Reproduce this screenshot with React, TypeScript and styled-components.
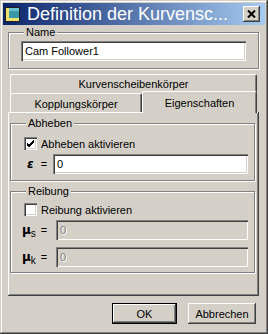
import React from 'react'
import styled, { createGlobalStyle } from 'styled-components'

const GlobalStyle = createGlobalStyle`
  * { box-sizing: border-box; }
  body { margin: 0; background: #d4d0c8; font-family: "Liberation Sans", Arial, sans-serif; font-size: 11px; color: #000; }
`

const raised = `inset -1px -1px #404040, inset 1px 1px #fff, inset -2px -2px #808080, inset 2px 2px #d4d0c8`
const sunken = `inset 1px 1px #808080, inset 2px 2px #404040, inset -1px -1px #fff, inset -2px -2px #d4d0c8`

const Window = styled.div`
  width: 268px;
  height: 334px;
  padding: 3px;
  background: #d4d0c8;
  box-shadow: inset -1px -1px #404040, inset 1px 1px #d4d0c8, inset -2px -2px #808080, inset 2px 2px #fff;
  display: flex;
  flex-direction: column;
`

const TitleBar = styled.div`
  height: 22px;
  flex-shrink: 0;
  display: flex;
  align-items: center;
  gap: 7px;
  padding: 0 5px 0 2px;
  background: linear-gradient(to right, #0a246a, #a6caf0);
`

const TitleText = styled.div`
  flex: 1;
  color: #fff;
  font-size: 18px;
  line-height: 22px;
  white-space: nowrap;
  overflow: hidden;
`

const CloseButton = styled.div`
  width: 17px;
  height: 16px;
  background: #d4d0c8;
  box-shadow: ${raised};
  display: flex;
  align-items: center;
  justify-content: center;
`

const Body = styled.div`
  display: flex;
  flex-direction: column;
  padding: 0 6px 0 5px;
`

// group box: caption line, then an etched frame pulled up under the caption
const Group = styled.div<{ $top?: number }>`
  margin-top: ${p => p.$top ?? 0}px;
  display: flex;
  flex-direction: column;
`

const CaptionRow = styled.div`
  display: flex;
  padding-left: 16px;
  height: 13px;
  position: relative;
  z-index: 1;
`

const Caption = styled.span`
  padding: 0 2px;
  line-height: 13px;
  background: #d4d0c8;
`

const Frame = styled.div<{ $pad: string }>`
  margin-top: -7px;
  padding: ${p => p.$pad};
  border: 1px solid #808080;
  box-shadow: inset 1px 1px #fff, 1px 1px #fff;
`

const TextInput = styled.div<{ $disabled?: boolean }>`
  flex: 1;
  height: 20px;
  padding: 0 4px;
  display: flex;
  align-items: center;
  background: ${p => (p.$disabled ? '#d4d0c8' : '#fff')};
  color: ${p => (p.$disabled ? '#808080' : '#000')};
  text-shadow: ${p => (p.$disabled ? '1px 1px #fff' : 'none')};
  box-shadow: ${sunken};
  white-space: nowrap;
`

const Tabs = styled.div`
  margin-top: 5px;
  display: flex;
  flex-direction: column;
`

const TabRow = styled.div`
  display: flex;
  align-items: flex-end;
  height: 19px;
  padding: 0 2px;
`

const Tab = styled.div<{ $width?: number; $active?: boolean; $drop?: number }>`
  flex: ${p => (p.$width ? `0 0 ${p.$width}px` : '1')};
  height: ${p => (p.$active ? 22 : 19)}px;
  margin-bottom: ${p => (p.$active ? -1 : 0)}px;
  position: relative;
  z-index: ${p => (p.$active ? 1 : 0)};
  display: flex;
  align-items: center;
  justify-content: center;
  padding-top: ${p => p.$drop ?? 0}px;
  background: #d4d0c8;
  border-top: 1px solid #fff;
  border-left: 1px solid #fff;
  border-right: 1px solid #404040;
  border-radius: 2px 2px 0 0;
  box-shadow: inset -1px 0 #808080;
`

const Panel = styled.div`
  height: 184px;
  padding: 5px 4px 0 2px;
  background: #d4d0c8;
  box-shadow: ${raised};
  display: flex;
  flex-direction: column;
`

const CheckRow = styled.div`
  display: flex;
  align-items: center;
  gap: 4px;
  padding-left: 13px;
  height: 15px;
`

const Box = styled.div`
  width: 13px;
  height: 13px;
  background: #fff;
  box-shadow: ${sunken};
  display: flex;
  align-items: center;
  justify-content: center;
`

const FieldRow = styled.div<{ $top: number }>`
  display: flex;
  align-items: center;
  margin-top: ${p => p.$top}px;
`

const Symbol = styled.div<{ $width: number; $indent: number }>`
  width: ${p => p.$width}px;
  padding-left: ${p => p.$indent}px;
  display: flex;
  align-items: center;
  white-space: nowrap;
`

const Greek = styled.span<{ $italic?: boolean }>`
  font-family: "DejaVu Sans", sans-serif;
  font-weight: bold;
  font-style: ${p => (p.$italic ? 'italic' : 'normal')};
  font-size: 12px;
`

const Sub = styled.span`
  font-size: 10px;
  position: relative;
  top: 3px;
  margin-right: 5px;
`

const Equals = styled.span<{ $gap: number }>`
  margin-left: ${p => p.$gap}px;
`

const ButtonRow = styled.div`
  display: flex;
  justify-content: flex-end;
  gap: 11px;
  margin-top: 7px;
  padding-right: 3px;
`

const Button = styled.div<{ $width: number; $default?: boolean }>`
  width: ${p => p.$width}px;
  height: 21px;
  display: flex;
  align-items: center;
  justify-content: center;
  background: #d4d0c8;
  border: ${p => (p.$default ? '1px solid #000' : 'none')};
  box-shadow: ${raised};
`

const AppIcon = () => (
  <svg width="15" height="15" viewBox="0 0 15 15">
    <rect x="0.5" y="0.5" width="14" height="14" fill="#f0e070" stroke="#202020" />
    <rect x="4" y="1" width="10" height="10" fill="#3a9aa8" />
    <rect x="4" y="1" width="10" height="3" fill="#6cc4d0" />
  </svg>
)

const Check = () => (
  <svg width="9" height="9" viewBox="0 0 9 9">
    <path d="M1 4 L3 6 L8 1 M1 5 L3 7 L8 2 M1 6 L3 8 L8 3" stroke="#000" strokeWidth="1" fill="none" />
  </svg>
)

export default function App() {
  return (
    <>
      <GlobalStyle />
      <Window>
        <TitleBar>
          <AppIcon />
          <TitleText>Definition der Kurvensc...</TitleText>
          <CloseButton>
            <svg width="9" height="8" viewBox="0 0 9 8">
              <path d="M1 0.5 L8 7.5 M8 0.5 L1 7.5" stroke="#000" strokeWidth="2" />
            </svg>
          </CloseButton>
        </TitleBar>

        <Body>
          <Group $top={1}>
            <CaptionRow><Caption>Name</Caption></CaptionRow>
            <Frame $pad="8px 12px 7px">
              <TextInput>Cam Follower1</TextInput>
            </Frame>
          </Group>

          <Tabs>
            <TabRow>
              <Tab>Kurvenscheibenkörper</Tab>
            </TabRow>
            <TabRow>
              <Tab $width={132} $drop={2}>Kopplungskörper</Tab>
              <Tab $active $drop={1}>Eigenschaften</Tab>
            </TabRow>
            <Panel>
              <Group>
                <CaptionRow><Caption>Abheben</Caption></CaptionRow>
                <Frame $pad="12px 6px 6px 0">
                  <CheckRow>
                    <Box><Check /></Box>
                    Abheben aktivieren
                  </CheckRow>
                  <FieldRow $top={3}>
                    <Symbol $width={42} $indent={16}>
                      <Greek $italic>ε</Greek>
                      <Equals $gap={7}>=</Equals>
                    </Symbol>
                    <TextInput>0</TextInput>
                  </FieldRow>
                </Frame>
              </Group>

              <Group $top={4}>
                <CaptionRow><Caption>Reibung</Caption></CaptionRow>
                <Frame $pad="10px 6px 5px 0">
                  <CheckRow>
                    <Box />
                    Reibung aktivieren
                  </CheckRow>
                  <FieldRow $top={3}>
                    <Symbol $width={45} $indent={11}>
                      <Greek>μ</Greek>
                      <Sub>s</Sub>
                      =
                    </Symbol>
                    <TextInput $disabled>0</TextInput>
                  </FieldRow>
                  <FieldRow $top={7}>
                    <Symbol $width={45} $indent={11}>
                      <Greek>μ</Greek>
                      <Sub>k</Sub>
                      =
                    </Symbol>
                    <TextInput $disabled>0</TextInput>
                  </FieldRow>
                </Frame>
              </Group>
            </Panel>
          </Tabs>

          <ButtonRow>
            <Button $width={65} $default>OK</Button>
            <Button $width={68}>Abbrechen</Button>
          </ButtonRow>
        </Body>
      </Window>
    </>
  )
}
